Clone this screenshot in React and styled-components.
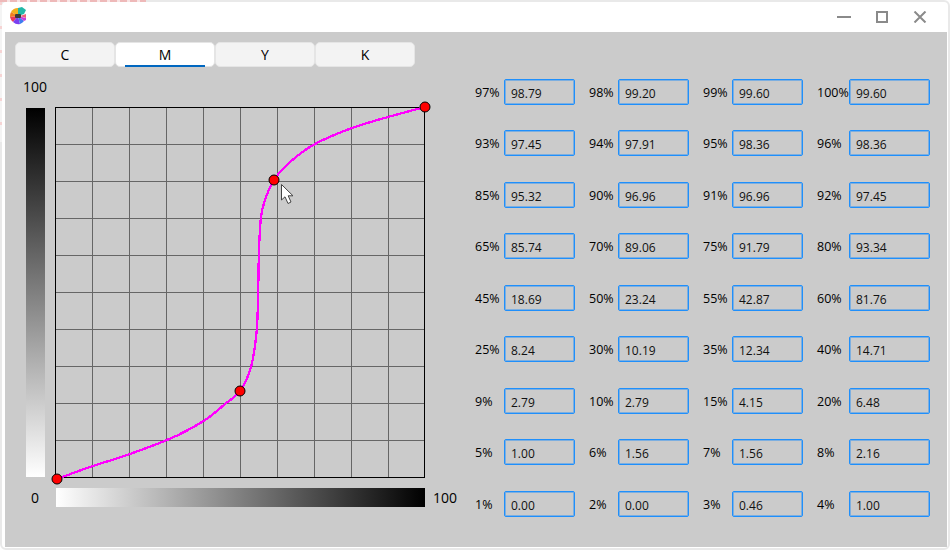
import React from 'react';
import styled, { createGlobalStyle } from 'styled-components';

const GlobalStyle = createGlobalStyle`
  html, body {
    margin: 0;
    padding: 0;
    background: #fff;
    overflow: hidden;
  }
  body {
    font-family: "Open Sans", "Liberation Sans", sans-serif;
    color: #000;
  }
`;

const Window = styled.div`
  position: relative;
  box-sizing: border-box;
  width: 950px;
  height: 550px;
  display: flex;
  flex-direction: column;
  background: #fff;
  border: 2px solid #e9e9e9;
  border-radius: 6px;
`;

// bits of another window peeking out behind this one
const BackdropTop = styled.div`
  position: absolute;
  left: -2px;
  top: -2px;
  width: 146px;
  height: 2px;
  background: repeating-linear-gradient(90deg, #eeb9b9 0 7px, #f8e4e4 7px 10px);
`;

const BackdropLeft = styled.div`
  position: absolute;
  left: -2px;
  top: 0;
  width: 2px;
  height: 140px;
  background: repeating-linear-gradient(180deg, #f6d4d4 0 3px, #f4f4f4 3px 24px);
`;

const TitleBar = styled.div`
  height: 30px;
  display: flex;
  align-items: center;
  padding-left: 7px;
  flex-shrink: 0;
`;

const IconSlot = styled.div`
  display: flex;
  margin-top: -2px;
`;

const WindowControls = styled.div`
  margin-left: auto;
  margin-right: 21px;
  display: flex;
  align-items: center;
  gap: 24px;
`;

const Content = styled.div`
  flex: 1;
  margin: 0 1px 1px 3px;
  padding: 10px;
  background: #cbcbcb;
`;

const Tabs = styled.div`
  display: flex;
  height: 25px;
`;

const Tab = styled.div`
  position: relative;
  box-sizing: border-box;
  width: 100px;
  height: 25px;
  display: flex;
  align-items: center;
  justify-content: center;
  font-size: 14px;
  color: #000;
  background: ${(p) => (p.$active ? '#fff' : '#f3f3f3')};
  border: 1px solid #e5e5e5;
  border-radius: 5px;

  &::after {
    content: '';
    display: ${(p) => (p.$active ? 'block' : 'none')};
    position: absolute;
    left: 9px;
    right: 9px;
    bottom: -1px;
    height: 2px;
    background: #0067c0;
  }
`;

const Main = styled.div`
  display: flex;
  margin-top: 12px;
`;

const CurvePanel = styled.div`
  width: 460px;
  flex-shrink: 0;
  display: flex;
  flex-direction: column;
`;

const PlotRow = styled.div`
  display: flex;
`;

const YAxis = styled.div`
  width: 30px;
  display: flex;
  flex-direction: column;
`;

const AxisLabel = styled.span`
  font-size: 14px;
  line-height: 16px;
  color: #000;
`;

const YMax = styled(AxisLabel)`
  margin-left: 8px;
`;

const VerticalRamp = styled.div`
  width: 19px;
  height: 369px;
  margin: 13px 0 0 11px;
  background: linear-gradient(180deg, #000, #fff);
`;

const Plot = styled.svg`
  display: block;
  width: 392px;
  height: 406px;
  flex-shrink: 0;
`;

const XAxis = styled.div`
  display: flex;
  align-items: center;
  margin-top: 3px;
`;

const XMin = styled(AxisLabel)`
  width: 41px;
  padding-left: 16px;
  box-sizing: border-box;
`;

const HorizontalRamp = styled.div`
  width: 369px;
  height: 19px;
  background: linear-gradient(90deg, #fff, #000);
`;

const XMax = styled(AxisLabel)`
  margin-left: 8px;
`;

const FieldGrid = styled.div`
  display: grid;
  grid-template-columns: 100px 100px 100px 113px;
  column-gap: 14px;
  row-gap: 25.5px;
  align-content: start;
  margin-top: -0.1px;
`;

const Field = styled.div`
  display: flex;
  align-items: center;
`;

const FieldLabel = styled.span`
  width: ${(p) => (p.$wide ? 32 : 29)}px;
  flex-shrink: 0;
  padding-top: 1px;
  font-size: 12.5px;
  color: #000;
  white-space: nowrap;
`;

const ValueBox = styled.div`
  flex: 1;
  box-sizing: border-box;
  height: 26px;
  display: flex;
  align-items: center;
  padding: 3px 5px 0 6px;
  font-size: 12px;
  color: #111;
  border: 1px solid #1f8ffb;
  border-radius: 2px;
  box-shadow: inset 0 0 0 1px rgba(31, 143, 251, 0.45);
`;

const rows = [
  [['97%', '98.79'], ['98%', '99.20'], ['99%', '99.60'], ['100%', '99.60']],
  [['93%', '97.45'], ['94%', '97.91'], ['95%', '98.36'], ['96%', '98.36']],
  [['85%', '95.32'], ['90%', '96.96'], ['91%', '96.96'], ['92%', '97.45']],
  [['65%', '85.74'], ['70%', '89.06'], ['75%', '91.79'], ['80%', '93.34']],
  [['45%', '18.69'], ['50%', '23.24'], ['55%', '42.87'], ['60%', '81.76']],
  [['25%', '8.24'], ['30%', '10.19'], ['35%', '12.34'], ['40%', '14.71']],
  [['9%', '2.79'], ['10%', '2.79'], ['15%', '4.15'], ['20%', '6.48']],
  [['5%', '1.00'], ['6%', '1.56'], ['7%', '1.56'], ['8%', '2.16']],
  [['1%', '0.00'], ['2%', '0.00'], ['3%', '0.46'], ['4%', '1.00']],
];

// points read off the curve, in page coordinates
const curvePoints = [
  [57, 479], [90, 467], [127, 455], [167, 440], [188, 430], [208, 418], [225, 404],
  [240, 391], [251, 367], [256.5, 333], [258, 300], [259, 250], [261, 217], [265, 200],
  [274, 180], [290, 162], [315, 144], [352, 128], [388, 117], [425, 107],
];

const handles = [[57, 479], [240, 391], [274, 180], [425, 107]];

const smoothPath = (pts) => {
  let d = `M${pts[0][0]} ${pts[0][1]}`;
  for (let i = 0; i < pts.length - 1; i++) {
    const p0 = pts[i - 1] || pts[i];
    const p1 = pts[i];
    const p2 = pts[i + 1];
    const p3 = pts[i + 2] || p2;
    const c1x = p1[0] + (p2[0] - p0[0]) / 6;
    const c1y = p1[1] + (p2[1] - p0[1]) / 6;
    const c2x = p2[0] - (p3[0] - p1[0]) / 6;
    const c2y = p2[1] - (p3[1] - p1[1]) / 6;
    d += ` C${c1x} ${c1y} ${c2x} ${c2y} ${p2[0]} ${p2[1]}`;
  }
  return d;
};

const gridSteps = [1, 2, 3, 4, 5, 6, 7, 8, 9];

function CurvePlot() {
  return (
    <Plot viewBox="45 79 392 406">
      <g stroke="#666" strokeWidth="1" shapeRendering="crispEdges">
        {gridSteps.map((i) => (
          <line key={`v${i}`} x1={55.5 + i * 37} y1="107" x2={55.5 + i * 37} y2="477" />
        ))}
        {gridSteps.map((i) => (
          <line key={`h${i}`} x1="55" y1={107.5 + i * 37} x2="425" y2={107.5 + i * 37} />
        ))}
      </g>
      <rect x="55.5" y="107.5" width="369" height="370" fill="none" stroke="#000" shapeRendering="crispEdges" />
      <path d={smoothPath(curvePoints)} fill="none" stroke="#ff00ff" strokeWidth="2.3" shapeRendering="crispEdges" />
      {handles.map(([x, y]) => (
        <circle key={x} cx={x} cy={y} r="5" fill="#ff0000" stroke="#000" strokeWidth="1" />
      ))}
      <path
        d="M281.5 184.5 V200 L285 196.8 L288 203.5 L291 202 L288.2 195.8 L293 195.8 Z"
        fill="#fff"
        stroke="#444"
        strokeWidth="1"
        strokeLinejoin="round"
      />
    </Plot>
  );
}

function AppIcon() {
  return (
    <svg width="18" height="18" viewBox="0 0 18 18">
      <path d="M9 9 L9 1 A8 8 0 0 0 2 5 Z" fill="#f2b01e" />
      <path d="M9 9 L2 5 A8 8 0 0 0 1 10 Z" fill="#f07f20" />
      <path d="M9 9 L1 10 A8 8 0 0 0 4 15 Z" fill="#e83a5c" />
      <path d="M9 9 L4 15 A8 8 0 0 0 11 17 Z" fill="#7a3ff0" />
      <path d="M9 9 L11 17 A8 8 0 0 0 15 14 Z" fill="#3f7df0" />
      <path d="M9 9 L15 14 L17 13 L17 11 Z" fill="#c43fe0" />
      <path d="M9 9 L9 1 L13 0 L17 3 L15 7 Z" fill="#22b8a8" />
      <path d="M11 9 L17 7 L17 11 Z" fill="#f0607a" />
      <rect x="6" y="7" width="6" height="4" rx="1" fill="#3a3a3a" />
    </svg>
  );
}

function WindowButtons() {
  return (
    <WindowControls>
      <svg width="14" height="12" viewBox="0 0 14 12">
        <path d="M0 6 H14" stroke="#8a8a8a" strokeWidth="2" />
      </svg>
      <svg width="14" height="12" viewBox="0 0 14 12">
        <rect x="2" y="1" width="10" height="10" fill="none" stroke="#8a8a8a" strokeWidth="2" />
      </svg>
      <svg width="14" height="12" viewBox="0 0 14 12">
        <path d="M1.5 0.5 L12.5 11.5 M12.5 0.5 L1.5 11.5" stroke="#8a8a8a" strokeWidth="2" />
      </svg>
    </WindowControls>
  );
}

export default function App() {
  return (
    <>
      <GlobalStyle />
      <Window>
        <BackdropTop />
        <BackdropLeft />
        <TitleBar>
          <IconSlot>
            <AppIcon />
          </IconSlot>
          <WindowButtons />
        </TitleBar>
        <Content>
          <Tabs>
            {['C', 'M', 'Y', 'K'].map((name) => (
              <Tab key={name} $active={name === 'M'}>{name}</Tab>
            ))}
          </Tabs>
          <Main>
            <CurvePanel>
              <PlotRow>
                <YAxis>
                  <YMax>100</YMax>
                  <VerticalRamp />
                </YAxis>
                <CurvePlot />
              </PlotRow>
              <XAxis>
                <XMin>0</XMin>
                <HorizontalRamp />
                <XMax>100</XMax>
              </XAxis>
            </CurvePanel>
            <FieldGrid>
              {rows.map((row) =>
                row.map(([label, value], col) => (
                  <Field key={label}>
                    <FieldLabel $wide={col === 3}>{label}</FieldLabel>
                    <ValueBox>{value}</ValueBox>
                  </Field>
                ))
              )}
            </FieldGrid>
          </Main>
        </Content>
      </Window>
    </>
  );
}
